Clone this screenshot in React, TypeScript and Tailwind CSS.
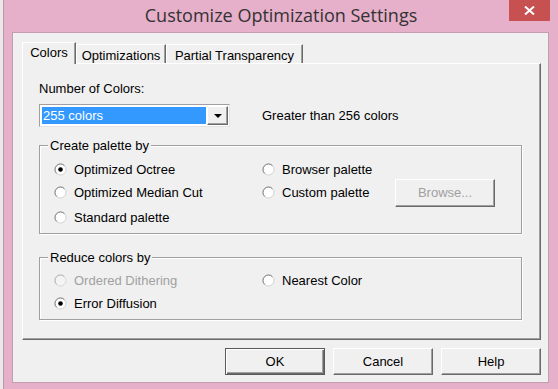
const sans = "font-['Liberation_Sans',Arial,sans-serif]"

function Radio({ checked, disabled }: { checked?: boolean; disabled?: boolean }) {
  return (
    <svg width="13" height="13" viewBox="0 0 13 13" className="shrink-0">
      <circle cx="6.5" cy="6.5" r="5.5" fill={disabled ? '#f4f4f4' : '#fff'} stroke={disabled ? '#d8d8d8' : '#d0d0d0'} />
      <path d="M2.6 10.4 A5.5 5.5 0 0 1 10.4 2.6" fill="none" stroke={disabled ? '#b4b4b4' : '#808080'} />
      {checked && <circle cx="6.5" cy="6.5" r="2.3" fill="#000" />}
    </svg>
  )
}

function Option({ label, checked, disabled }: { label: string; checked?: boolean; disabled?: boolean }) {
  return (
    <div className="flex items-center gap-[7px]">
      <Radio checked={checked} disabled={disabled} />
      <span className={disabled ? 'text-[#a0a0a0]' : 'text-black'}>{label}</span>
    </div>
  )
}

function Group({ title, className, children }: { title: string; className: string; children: React.ReactNode }) {
  return (
    <div className={`relative w-[483px] border border-[#a0a0a0] shadow-[1px_1px_0_#fff,inset_1px_1px_0_#fff] ${className}`}>
      <span className="absolute left-[8px] -top-[8px] bg-[#f0f0f0] px-[2px] leading-[15px]">{title}</span>
      {children}
    </div>
  )
}

const raised =
  'flex items-center justify-center h-[27px] w-[100px] bg-[#f0f0f0] border-t border-l border-t-white border-l-white border-r border-b border-r-[#696969] border-b-[#696969] shadow-[inset_-1px_-1px_0_#a0a0a0]'

export default function App() {
  return (
    <div className={`flex w-[558px] h-[389px] bg-[#e6afca] overflow-hidden ${sans} text-[13px] leading-[15px] text-black`}>
      <div className="w-[3px] bg-[#efe5ea]" />
      <div className="w-px bg-[#aaa2a6]" />
      <div className="flex-1 flex flex-col">
        {/* title bar */}
        <div className="relative h-[32px] flex items-center justify-center">
          <span className="font-['Open_Sans',sans-serif] text-[18px] leading-[22px] text-[#333] -mt-[2px]">
            Customize Optimization Settings
          </span>
          <div className="absolute right-[8px] top-0 w-[41px] h-[21px] bg-[#c75050] flex items-center justify-center">
            <svg width="11" height="9" viewBox="0 0 11 9">
              <path d="M1 0.5 L10 8.5 M10 0.5 L1 8.5" stroke="#fff" strokeWidth="2" />
            </svg>
          </div>
        </div>

        {/* client area */}
        <div className="ml-[8px] mr-[9px] h-[351px] border border-[#c49db1] bg-[#f0f0f0] pl-[9px] pt-[9px]">
          {/* tabs */}
          <div className="flex items-end h-[21px]">
            <div className="relative z-10 w-[54px] h-[22px] -mb-px bg-[#f0f0f0] border-t border-l border-white border-r border-r-[#696969] shadow-[inset_-1px_0_0_#a0a0a0] flex justify-center pt-[2px]">
              Colors
            </div>
            <div className="w-[90px] h-[19px] border-t border-l border-white border-r border-r-[#696969] shadow-[inset_-1px_0_0_#a0a0a0] flex justify-center pt-[3px]">
              Optimizations
            </div>
            <div className="w-[137px] h-[19px] border-t border-l border-white border-r border-r-[#696969] shadow-[inset_-1px_0_0_#a0a0a0] flex justify-center pt-[3px]">
              Partial Transparency
            </div>
          </div>

          {/* tab panel */}
          <div className="w-[519px] h-[277px] border-t border-l border-white border-r border-b border-r-[#696969] border-b-[#696969] shadow-[inset_-1px_-1px_0_#a0a0a0] pl-[16px]">
            <div className="mt-[17px]">Number of Colors:</div>

            <div className="mt-[8px] flex items-center">
              <div className="w-[191px] h-[23px] border border-[#a0a0a0] border-r-[#e3e3e3] border-b-[#e3e3e3] bg-white p-px flex">
                <div className="flex-1 p-px">
                  <div className="h-full bg-[#3399ff] text-white flex items-center pl-px">255 colors</div>
                </div>
                <div className="w-[21px] h-full bg-[#f0f0f0] border-t border-l border-white border-r border-b border-r-[#696969] border-b-[#696969] shadow-[inset_-1px_-1px_0_#a0a0a0] flex items-center justify-center">
                  <svg width="8" height="4" viewBox="0 0 8 4">
                    <path d="M0 0 H8 L4 4 Z" fill="#000" />
                  </svg>
                </div>
              </div>
              <span className="ml-[32px]">Greater than 256 colors</span>
            </div>

            <Group title="Create palette by" className="mt-[18px] h-[89px] pt-[12px] pl-[14px]">
              <div className="flex h-[23px] items-center">
                <div className="w-[208px]"><Option label="Optimized Octree" checked /></div>
                <Option label="Browser palette" />
              </div>
              <div className="flex h-[23px] items-center">
                <div className="w-[208px]"><Option label="Optimized Median Cut" /></div>
                <div className="w-[133px]"><Option label="Custom palette" /></div>
                <div className={`${raised} w-[99px] h-[28px] text-[#a0a0a0]`}>Browse...</div>
              </div>
              <div className="flex h-[23px] items-center mt-[2px]">
                <Option label="Standard palette" />
              </div>
            </Group>

            <Group title="Reduce colors by" className="mt-[23px] h-[63px] pt-[11px] pl-[14px]">
              <div className="flex h-[23px] items-center">
                <div className="w-[208px]"><Option label="Ordered Dithering" disabled /></div>
                <Option label="Nearest Color" />
              </div>
              <div className="flex h-[23px] items-center">
                <Option label="Error Diffusion" checked />
              </div>
            </Group>
          </div>

          {/* buttons */}
          <div className="w-[519px] mt-[8px] flex justify-end gap-[8px]">
            <div className="flex items-center justify-center h-[27px] w-[100px] bg-[#f0f0f0] border border-[#5a5a5a] shadow-[inset_1px_1px_0_#fff,inset_-1px_-1px_0_#696969,inset_-2px_-2px_0_#a0a0a0]">
              OK
            </div>
            <div className={raised}>Cancel</div>
            <div className={raised}>Help</div>
          </div>
        </div>
      </div>
    </div>
  )
}
